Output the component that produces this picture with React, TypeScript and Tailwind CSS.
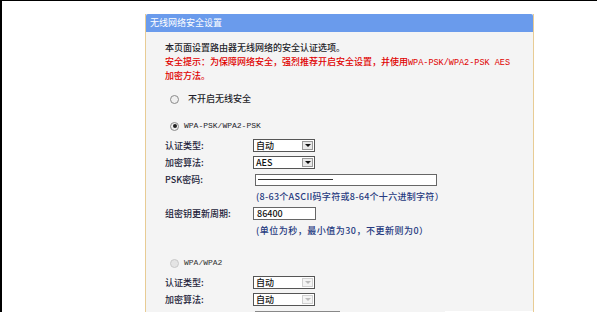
import React from 'react'

const CJK = "font-['Noto_Sans_CJK_SC',sans-serif]"
const MONO = "font-['Liberation_Mono',monospace]"

function Radio({ checked = false, disabled = false }: { checked?: boolean; disabled?: boolean }) {
  return (
    <span
      className={`flex h-[9px] w-[9px] shrink-0 items-center justify-center rounded-full border ${
        disabled ? 'border-[#c8c8c8] bg-[#e4e4e4]' : 'border-[#8a8a8a] bg-[#f0f0f0]'
      }`}
    >
      {checked && <span className="h-[4px] w-[4px] rounded-full bg-[#222]" />}
    </span>
  )
}

function Select({ value, disabled = false }: { value: string; disabled?: boolean }) {
  return (
    <div className="flex h-[13px] w-[62px] items-stretch border border-[#555] bg-white">
      <span className="flex-1 pl-[2px] text-[9px] leading-[11px] text-[#111]">{value}</span>
      <span
        className={`m-px flex w-[11px] items-center justify-center border ${
          disabled ? 'border-[#d0d0d0] bg-[#f4f4f4]' : 'border-[#999] bg-[#e8e8e8]'
        }`}
      >
        <span
          className={`h-0 w-0 border-x-[3px] border-t-[3px] border-x-transparent ${
            disabled ? 'border-t-[#bbb]' : 'border-t-[#111]'
          }`}
        />
      </span>
    </div>
  )
}

function Row({ label, children }: { label: string; children?: React.ReactNode }) {
  return (
    <div className="flex h-[17px] items-center">
      <span className="w-[88px] text-[9px] text-[#23233a]">{label}</span>
      {children}
    </div>
  )
}

export default function App() {
  return (
    <div className={`h-[312px] w-[597px] overflow-hidden border-l-2 border-t border-black bg-white font-medium ${CJK}`}>
      <div className="ml-[143px] mt-[13px] w-[389px] border-x border-[#e8cc94] bg-[#f4f4f4]">
        <div className="flex h-[18px] items-center rounded-t-[2px] bg-[#6a9bec] pl-[4px] text-[9px] font-normal text-white">
          无线网络安全设置
        </div>

        <div className="pl-[19px] pt-[9px]">
          <div className="h-[14px] text-[9px] leading-[14px] text-[#1e1e2a]">本页面设置路由器无线网络的安全认证选项。</div>
          <div className="h-[14px] text-[9px] leading-[14px] text-[#e00000]">
            安全提示：为保障网络安全，强烈推荐开启安全设置，并使用
            <span className={`${MONO} text-[8.5px]`}>WPA-PSK/WPA2-PSK AES</span>
          </div>
          <div className="h-[14px] text-[9px] leading-[14px] text-[#e00000]">加密方法。</div>

          <div className="mt-[9px] flex h-[14px] items-center gap-[9px] pl-[5px] text-[9px] text-[#1e1e2a]">
            <Radio />
            <span>不开启无线安全</span>
          </div>

          <div className="mt-[13px] flex h-[14px] items-center gap-[5px] pl-[5px] text-[#1e1e2a]">
            <Radio checked />
            <span className={`${MONO} text-[8px]`}>WPA-PSK/WPA2-PSK</span>
          </div>

          <div className="mt-[4px]">
            <Row label="认证类型:">
              <Select value="自动" />
            </Row>
            <Row label="加密算法:">
              <Select value="AES" />
            </Row>
            <Row label="PSK密码:">
              <div className="ml-[2px] flex h-[12px] w-[182px] items-center border border-[#666] bg-white pl-[2px]">
                <span className="h-px w-[75px] bg-[#333]" />
              </div>
            </Row>
            <Row label="">
              <span className="pl-[3px] text-[9px] tracking-[0.3px] text-[#263a80]">(8-63个ASCII码字符或8-64个十六进制字符）</span>
            </Row>
            <Row label="组密钥更新周期:">
              <div className="flex h-[13px] w-[63px] items-center border border-[#666] bg-white pl-[3px] text-[9px] text-[#111]">
                86400
              </div>
            </Row>
            <Row label="">
              <span className="pl-[3px] text-[9px] tracking-[0.5px] text-[#263a80]">(单位为秒，最小值为30，不更新则为0）</span>
            </Row>
          </div>

          <div className="mt-[17px] flex h-[14px] items-center gap-[5px] pl-[5px] text-[#333]">
            <Radio disabled />
            <span className={`${MONO} text-[8px]`}>WPA/WPA2</span>
          </div>

          <div className="mt-[4px]">
            <Row label="认证类型:">
              <Select value="自动" disabled />
            </Row>
            <Row label="加密算法:">
              <Select value="自动" disabled />
            </Row>
            <Row label="">
              <div className="ml-[2px] h-[12px] w-[85px] border border-[#888] bg-white" />
              <div className="ml-[105px] h-[12px] w-[88px] bg-white" />
            </Row>
          </div>
        </div>
      </div>
    </div>
  )
}
